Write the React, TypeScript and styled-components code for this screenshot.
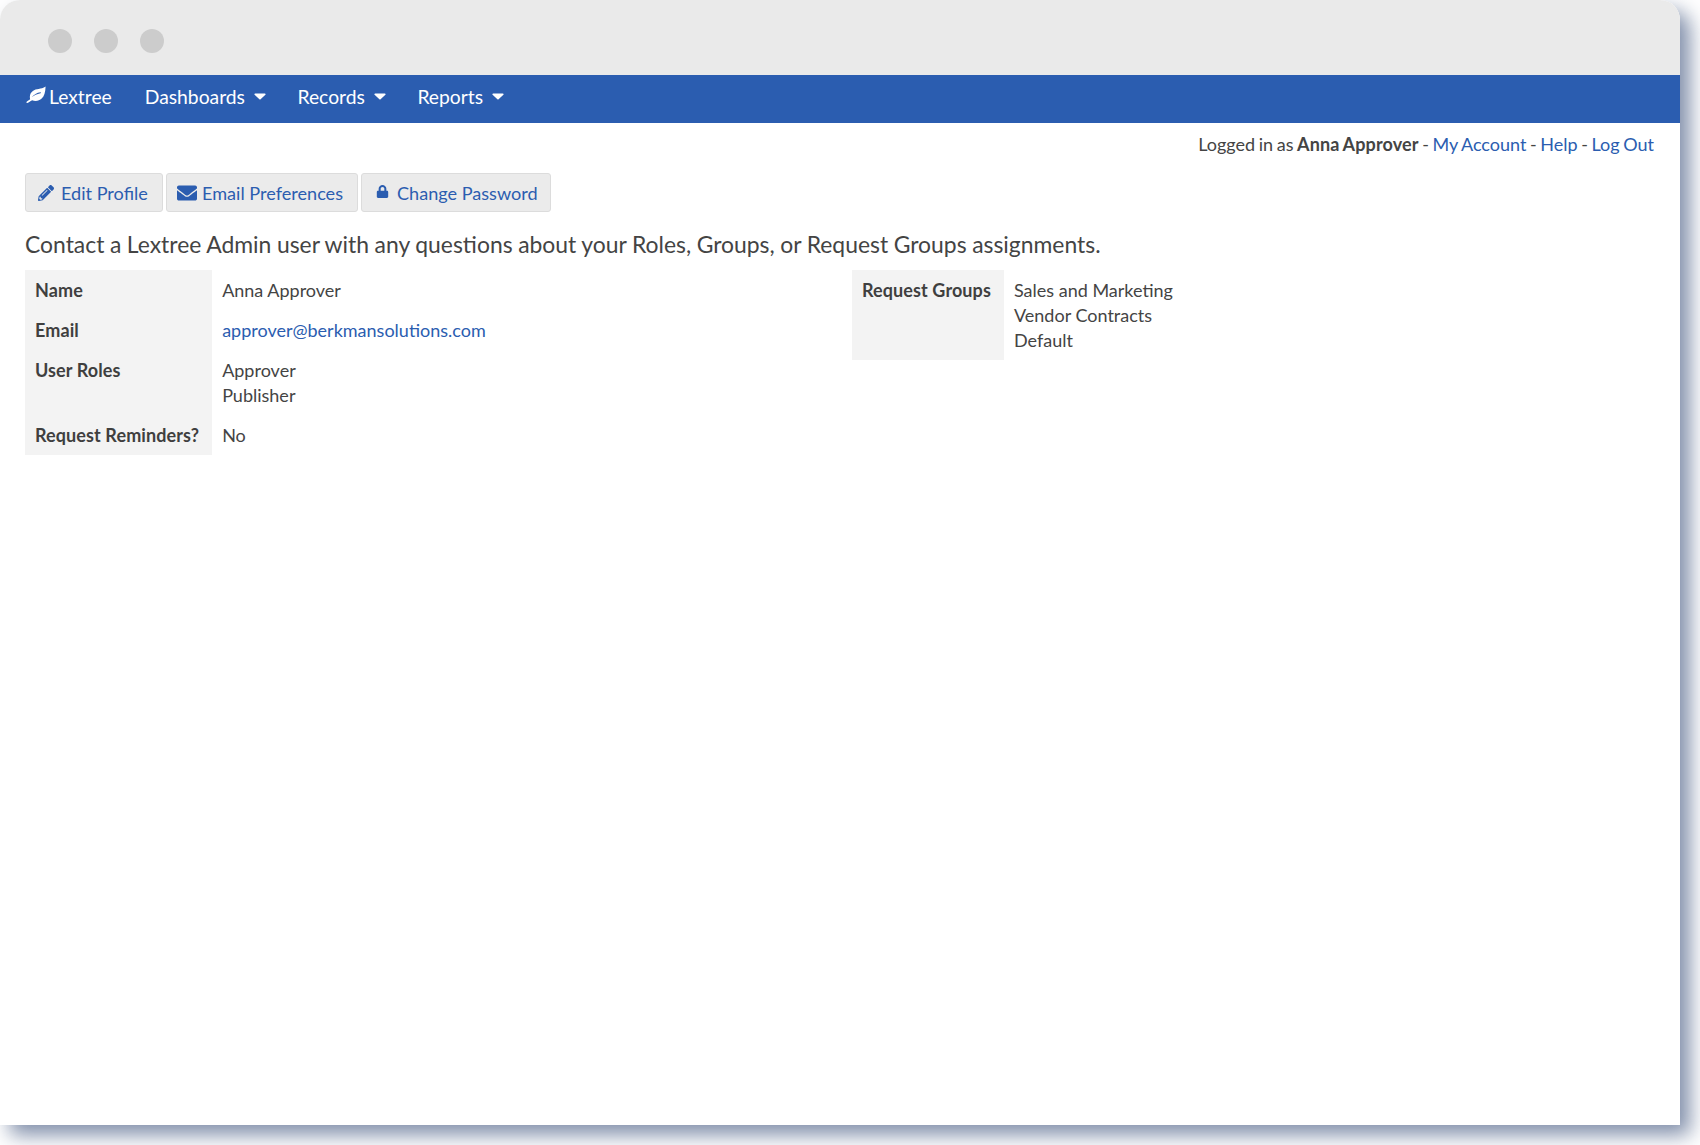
import React from "react";
import styled, { createGlobalStyle } from "styled-components";
import { FaPencilAlt, FaEnvelope, FaLock } from "react-icons/fa";

const Global = createGlobalStyle`
  html, body { margin: 0; padding: 0; background: #fff; }
  body { font-family: Lato, "Open Sans", sans-serif; color: #444; overflow: hidden; }
  * { box-sizing: border-box; }
`;

const BLUE = "#2b5db0";

const Page = styled.div`
  width: 1700px;
  height: 1145px;
  overflow: hidden;
`;

const Win = styled.div`
  width: 1680px;
  height: 1125px;
  background: #fff;
  border-radius: 20px 20px 0 0;
  box-shadow: 10px 10px 20px rgba(70, 90, 130, 0.68);
  overflow: hidden;
`;

const TitleBar = styled.div`
  height: 75px;
  background: #eaeaea;
  display: flex;
  align-items: center;
  gap: 22px;
  padding: 6px 0 0 47.500px;
`;

const Dot = styled.span`
  width: 24px;
  height: 24px;
  border-radius: 50%;
  background: #ccc;
`;

const Nav = styled.nav`
  height: 48px;
  background: ${BLUE};
  display: flex;
  align-items: center;
  padding: 0 0 5px 26px;
  color: #fff;
  font-size: 19.300px;
`;

const Brand = styled.span`
  display: flex;
  align-items: center;
  gap: 3px;
  margin-right: 33px;
`;

const LeafIcon = styled.svg`
  width: 20px;
  height: 17px;
  margin-top: -4px;
  flex: none;
`;

const MenuItem = styled.span`
  display: flex;
  align-items: center;
  margin-right: 31.500px;
`;

const Caret = styled.svg`
  width: 12px;
  height: 7px;
  margin-left: 9px;
  margin-top: -1px;
  flex: none;
`;

const Content = styled.main`
  padding: 9px 26px 0 25px;
`;

const UserLine = styled.div`
  text-align: right;
  font-size: 18px;
  line-height: 25px;
  word-spacing: -1px;
  b { font-weight: 700; letter-spacing: 0.15px; }
`;

const Link = styled.a`
  color: ${BLUE};
  text-decoration: none;
`;

const Buttons = styled.div`
  display: flex;
  gap: 3px;
  margin-top: 16px;
`;

const Button = styled.a<{ $w: number; $pad: number; $gap: number }>`
  width: ${(p) => p.$w}px;
  height: 39px;
  display: flex;
  align-items: center;
  gap: ${(p) => p.$gap}px;
  padding-left: ${(p) => p.$pad}px;
  padding-top: 1px;
  background: #ebebeb;
  border: 1px solid #dcdcdc;
  border-radius: 3px;
  color: ${BLUE};
  font-size: 18.100px;
  svg { flex: none; }
`;

const LockWrap = styled.span`
  display: flex;
  margin-top: -3px;
`;

const Heading = styled.p`
  margin: 16px 0 10px;
  font-size: 22.900px;
  word-spacing: -0.3px;
  line-height: 32px;
`;

const Columns = styled.div`
  display: grid;
  grid-template-columns: 827px 1fr;
  align-items: start;
  justify-items: start;
`;

const Info = styled.table`
  border-collapse: collapse;
  font-size: 18px;
  line-height: 25px;
`;

const Label = styled.th`
  background: #f3f3f3;
  color: #3f3f3f;
  font-weight: 700;
  letter-spacing: 0.1px;
  text-align: left;
  vertical-align: top;
  padding: 7.500px 13px 7.500px 10px;
  white-space: nowrap;
`;

const Value = styled.td`
  padding: 7.500px 10px;
  vertical-align: top;
  color: #444;
`;

const Line = styled.div``;

const CaretGlyph = () => (
  <Caret viewBox="0 0 12 7">
    <path d="M1.2 0.5h9.6c.8 0 1.1.8.6 1.3L6.6 6.2c-.3.3-.9.3-1.2 0L.6 1.8C.1 1.3.4.5 1.2.5z" fill="#fff" />
  </Caret>
);

export default function App() {
  return (
    <Page>
      <Global />
      <Win>
        <TitleBar>
          <Dot />
          <Dot />
          <Dot />
        </TitleBar>
        <Nav>
          <Brand>
            <LeafIcon viewBox="0 0 20 17">
              <path
                fillRule="evenodd"
                d="M19.6.4c-.3 5.6-1.2 9.6-3.9 12.2-2.6 2.5-6.4 2.9-9.6 1.7-1.1.6-2.3 1.5-3.6 2.3-.6.3-1.4.5-1.9.1-.5-.5.1-1.2.6-1.5 1-.8 2-1.3 3-2-.9-2.8-.1-6.2 2.7-8.1C10 2 15 3.600 19.600.4zM14.500 6.200C11 6.600 7.800 8.600 5.600 11.500c2.400-2 5.400-3.700 8.900-4.300.6-.1.600-1.100 0-1z"
                fill="#fff"
              />
            </LeafIcon>
            Lextree
          </Brand>
          <MenuItem>
            Dashboards
            <CaretGlyph />
          </MenuItem>
          <MenuItem>
            Records
            <CaretGlyph />
          </MenuItem>
          <MenuItem>
            Reports
            <CaretGlyph />
          </MenuItem>
        </Nav>
        <Content>
          <UserLine>
            Logged in as <b>Anna Approver</b> - <Link>My Account</Link> - <Link>Help</Link> - <Link>Log Out</Link>
          </UserLine>
          <Buttons>
            <Button $w={138} $pad={12} $gap={7}>
              <FaPencilAlt size={16} />
              Edit Profile
            </Button>
            <Button $w={192} $pad={10} $gap={5}>
              <FaEnvelope size={20} />
              Email Preferences
            </Button>
            <Button $w={190} $pad={14} $gap={8}>
              <LockWrap>
                <FaLock size={13} />
              </LockWrap>
              Change Password
            </Button>
          </Buttons>
          <Heading>
            Contact a Lextree Admin user with any questions about your Roles, Groups, or Request Groups assignments.
          </Heading>
          <Columns>
            <Info>
              <tbody>
                <tr>
                  <Label>Name</Label>
                  <Value>Anna Approver</Value>
                </tr>
                <tr>
                  <Label>Email</Label>
                  <Value>
                    <Link>approver@berkmansolutions.com</Link>
                  </Value>
                </tr>
                <tr>
                  <Label>User Roles</Label>
                  <Value>
                    <Line>Approver</Line>
                    <Line>Publisher</Line>
                  </Value>
                </tr>
                <tr>
                  <Label>Request Reminders?</Label>
                  <Value>No</Value>
                </tr>
              </tbody>
            </Info>
            <Info>
              <tbody>
                <tr>
                  <Label>Request Groups</Label>
                  <Value>
                    <Line>Sales and Marketing</Line>
                    <Line>Vendor Contracts</Line>
                    <Line>Default</Line>
                  </Value>
                </tr>
              </tbody>
            </Info>
          </Columns>
        </Content>
      </Win>
    </Page>
  );
}
